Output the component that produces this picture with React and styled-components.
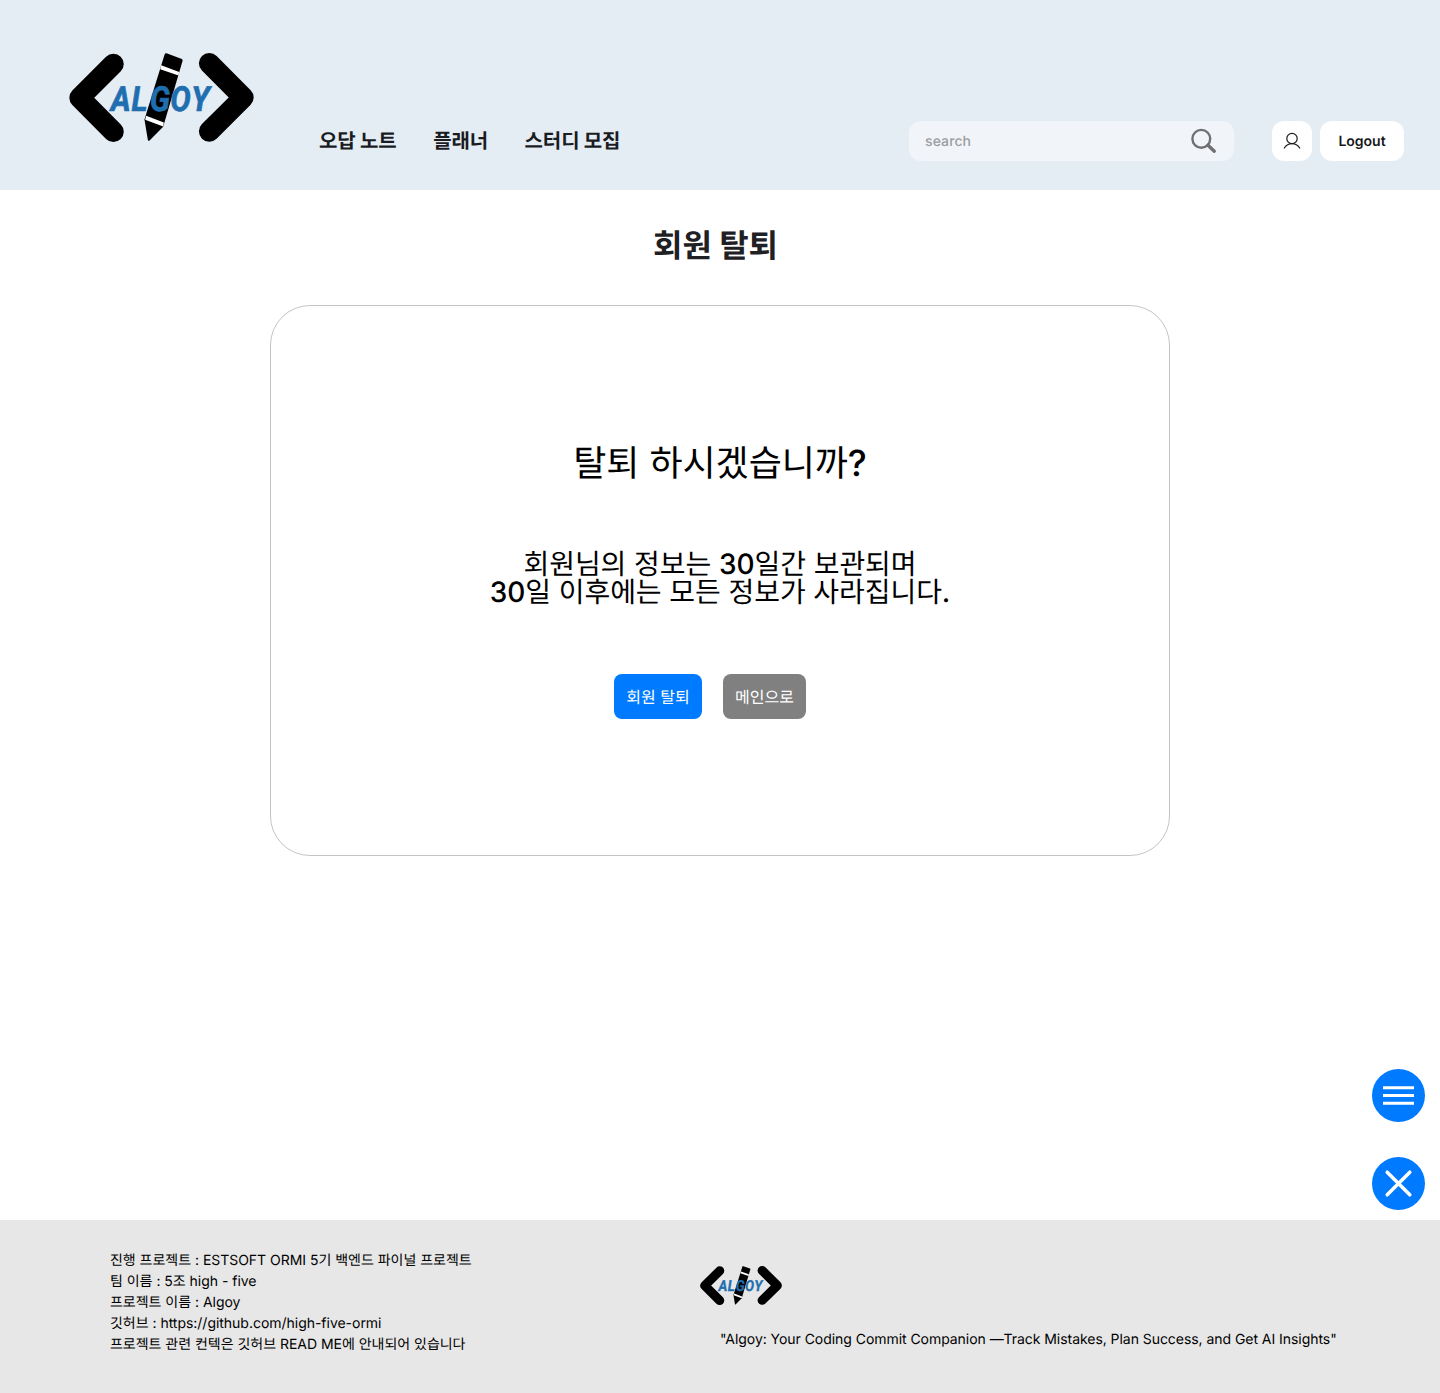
import React from "react";
import styled, { createGlobalStyle } from "styled-components";

const Global = createGlobalStyle`
  * { box-sizing: border-box; }
  body { margin: 0; background: #fff; color: #000; font-family: Inter, "Noto Sans CJK KR", sans-serif; text-rendering: geometricPrecision; }
  button, input { font-family: inherit; text-rendering: inherit; }
  h1, h2, p { margin: 0; }
`;

const Page = styled.div`
  display: flex;
  flex-direction: column;
  height: 1393px;
`;

const Header = styled.header`
  display: flex;
  height: 190px;
  padding-right: 36px;
  background: #e4ecf4;
`;

const LogoLink = styled.a`
  display: block;
  flex: none;
  margin: ${(p) => p.$margin};
  line-height: 0;
`;

const Nav = styled.nav`
  display: flex;
  gap: 36.6px;
  margin: 125px 0 0 65px;
`;

const NavLink = styled.a`
  font: 700 20px/30px "Noto Sans CJK KR", sans-serif;
  letter-spacing: -0.12px;
  color: #1a1c1f;
  white-space: nowrap;
`;

const Tools = styled.div`
  display: flex;
  height: 40px;
  margin: 121px 0 0 auto;
`;

const SearchBox = styled.div`
  display: flex;
  align-items: center;
  justify-content: space-between;
  width: 325px;
  margin-right: 38px;
  padding: 0 15px 0 16px;
  border-radius: 12px;
  background: #f1f5f9;
`;

const SearchInput = styled.input`
  width: 200px;
  padding: 1px 0 0;
  border: 0;
  outline: 0;
  background: transparent;
  font-size: 14px;
  font-weight: 500;
  letter-spacing: 0.1px;
  &::placeholder { color: #9b9da0; opacity: 1; }
`;

const HeaderButton = styled.button`
  display: flex;
  align-items: center;
  justify-content: center;
  width: ${(p) => p.$width}px;
  height: 40px;
  margin-right: ${(p) => p.$gap || 0}px;
  padding: ${(p) => p.$padTop || 0}px 0 0;
  border: 0;
  border-radius: 12px;
  background: #fff;
  color: #15171a;
  font-size: 14px;
  font-weight: 600;
  line-height: 20px;
`;

const Main = styled.main`
  display: flex;
  flex: 1;
  flex-direction: column;
  align-items: center;
`;

const Title = styled.h1`
  margin: 30px 9px 0 0;
  font: 700 32px/48px "Noto Sans CJK KR", sans-serif;
  color: #1f2024;
`;

const Card = styled.section`
  display: flex;
  flex-direction: column;
  align-items: center;
  width: 900px;
  height: 551px;
  margin-top: 37px;
  padding-top: 139px;
  border: 1px solid #c4c4c4;
  border-radius: 40px;
`;

const Question = styled.h2`
  font-size: 36px;
  font-weight: 400;
  line-height: 36px;
  letter-spacing: -0.05px;
`;

const Notice = styled.p`
  margin-top: 69px;
  font-size: 28px;
  font-weight: 400;
  line-height: 28px;
  letter-spacing: -0.07px;
  text-align: center;
`;

const Latin = styled.span`
  font-weight: 500;
`;

const Actions = styled.div`
  display: flex;
  gap: 21px;
  margin: 68px 20px 0 0;
`;

const ActionButton = styled.button`
  width: ${(p) => p.$width}px;
  height: 45px;
  padding: 0 0 2px;
  border: 0;
  border-radius: 8px;
  background: ${(p) => p.$color};
  color: #fff;
  font-size: 16px;
  font-weight: 400;
`;

const Floating = styled.div`
  position: fixed;
  top: 1069px;
  right: 15px;
  display: flex;
  flex-direction: column;
  gap: 35px;
`;

const RoundButton = styled.button`
  display: flex;
  width: 53px;
  height: 53px;
  padding: 0;
  border: 0;
  border-radius: 50%;
  background: #007bff;
`;

const Footer = styled.footer`
  display: flex;
  height: 173px;
  background: #e7e7e7;
  font-size: 14px;
  line-height: 21px;
`;

const Info = styled.div`
  width: 700px;
  padding: 30px 0 0 110px;
  letter-spacing: -0.025px;
`;

const Brand = styled.div`
  display: flex;
  flex-direction: column;
  align-items: flex-start;
`;

const Slogan = styled.p`
  margin: 24px 0 0 20px;
  letter-spacing: -0.05px;
  white-space: nowrap;
`;

const LogoWord = styled.text`
  font-family: Roboto, sans-serif;
  font-size: 104px;
  font-weight: 700;
  font-style: italic;
  fill: #1f6eb0;
  stroke: #1f6eb0;
  stroke-width: 2px;
`;

function Logo({ width, height }) {
  return (
    <svg width={width} height={height} viewBox="59 68 554 268" preserveAspectRatio="none">
      <g fill="none" stroke="#000" strokeWidth="62" strokeLinecap="round" strokeLinejoin="round">
        <path d="M192 101 91 203 192 305" />
        <path d="M479 99 581 202 479 304" />
      </g>
      <path d="M351 69 397 86Q400 88 399 92L341 290 301 331Q296 335 295 329L285 268 345 73Q347 68 351 69Z" />
      <path d="M335 105 389 125 387 136 332 117ZM290 257 343 277 341 289 287 269Z" fill="#fff" />
      <LogoWord transform="translate(0 242) scale(.88 1)" x="209 280 342 412 483">ALGOY</LogoWord>
    </svg>
  );
}

const info = [
  "진행 프로젝트 : ESTSOFT ORMI 5기 백엔드 파이널 프로젝트",
  "팀 이름 : 5조 high - five",
  "프로젝트 이름 : Algoy",
  "깃허브 : https://github.com/high-five-ormi",
  "프로젝트 관련 컨텍은 깃허브 READ ME에 안내되어 있습니다",
];

export default function App() {
  return (
    <Page>
      <Global />
      <Header>
        <LogoLink $margin="53px 0 0 69px"><Logo width={185} height={89} /></LogoLink>
        <Nav>
          <NavLink>오답 노트</NavLink>
          <NavLink>플래너</NavLink>
          <NavLink>스터디 모집</NavLink>
        </Nav>
        <Tools>
          <SearchBox>
            <SearchInput placeholder="search" />
            <svg width="30" height="30" viewBox="0 0 30 30" fill="none" stroke="#707070" strokeLinecap="round">
              <circle cx="12.3" cy="12.8" r="8.9" strokeWidth="2.4" />
              <path d="M19 19.2 25.3 25.2" strokeWidth="3.4" />
            </svg>
          </SearchBox>
          <HeaderButton $width={40} $gap={8} aria-label="profile">
            <svg width="20" height="20" viewBox="0 0 20 20" fill="none" stroke="#1a1c1f" strokeWidth="1.2" strokeLinecap="round">
              <circle cx="10" cy="7.5" r="5.2" />
              <path d="M2.3 17C4.2 14.2 6.8 12.7 10 12.7S15.8 14.2 17.7 17" />
            </svg>
          </HeaderButton>
          <HeaderButton $width={84} $padTop={2}>Logout</HeaderButton>
        </Tools>
      </Header>
      <Main>
        <Title>회원 탈퇴</Title>
        <Card>
          <Question>탈퇴 하시겠습니까<Latin>?</Latin></Question>
          <Notice>회원님의 정보는 <Latin>30</Latin>일간 보관되며<br /><Latin>30</Latin>일 이후에는 모든 정보가 사라집니다<Latin>.</Latin></Notice>
          <Actions>
            <ActionButton $width={88} $color="#007bff">회원 탈퇴</ActionButton>
            <ActionButton $width={83} $color="#808080">메인으로</ActionButton>
          </Actions>
        </Card>
      </Main>
      <Footer>
        <Info>{info.map((line) => <p key={line}>{line}</p>)}</Info>
        <Brand>
          <LogoLink $margin="46px 0 0 0"><Logo width={82} height={39} /></LogoLink>
          <Slogan>"Algoy: Your Coding Commit Companion —Track Mistakes, Plan Success, and Get AI Insights"</Slogan>
        </Brand>
      </Footer>
      <Floating>
        <RoundButton aria-label="menu">
          <svg width="53" height="53" viewBox="0 0 53 53" stroke="#fff" strokeWidth="3">
            <path d="M11 18.7H42M11 26.5H42M11 34.3H42" />
          </svg>
        </RoundButton>
        <RoundButton aria-label="close">
          <svg width="53" height="53" viewBox="0 0 53 53" stroke="#fff" strokeWidth="3.5" strokeLinecap="round">
            <path d="M15.2 15.2 37.8 37.8M37.8 15.2 15.2 37.8" />
          </svg>
        </RoundButton>
      </Floating>
    </Page>
  );
}
